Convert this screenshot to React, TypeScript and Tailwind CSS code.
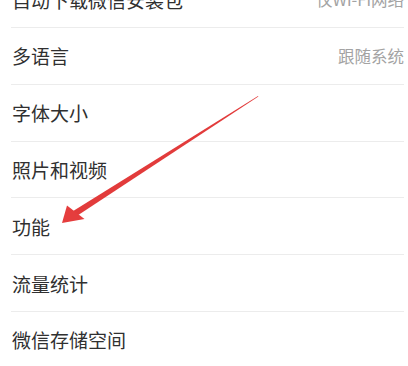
const rows: { label: string; value?: string }[] = [
  { label: "自动下载微信安装包", value: "仅Wi-Fi网络" },
  { label: "多语言", value: "跟随系统" },
  { label: "字体大小" },
  { label: "照片和视频" },
  { label: "功能" },
  { label: "流量统计" },
  { label: "微信存储空间" },
];

const App = () => {
  return (
    <div
      className="relative h-[366px] w-[408px] overflow-hidden bg-white"
      style={{ fontFamily: '"Noto Sans CJK SC", "Noto Sans", sans-serif' }}
    >
      <div className="-mt-[28.8px] flex flex-col">
        {rows.map((row) => (
          <div key={row.label} className="ml-[11px] mr-[4px] flex h-[56.8px] items-center justify-between border-b border-[#ececec] pl-[1px]">
            <span className="text-[19px] leading-none text-[#303030]">{row.label}</span>
            {row.value && (
              <span className="text-[16.5px] leading-none text-[#a3a3a3]">{row.value}</span>
            )}
          </div>
        ))}
      </div>

      {/* red annotation arrow */}
      <svg className="pointer-events-none absolute left-0 top-0" width="408" height="366" viewBox="0 0 408 366">
        <polygon points="258,96 258.4,96.6 76.8,216 73.2,211" fill="#e23b3b" />
        <polygon points="62,223 67,205.5 84.5,219" fill="#e53d3d" />
      </svg>
    </div>
  );
};

export default App;
